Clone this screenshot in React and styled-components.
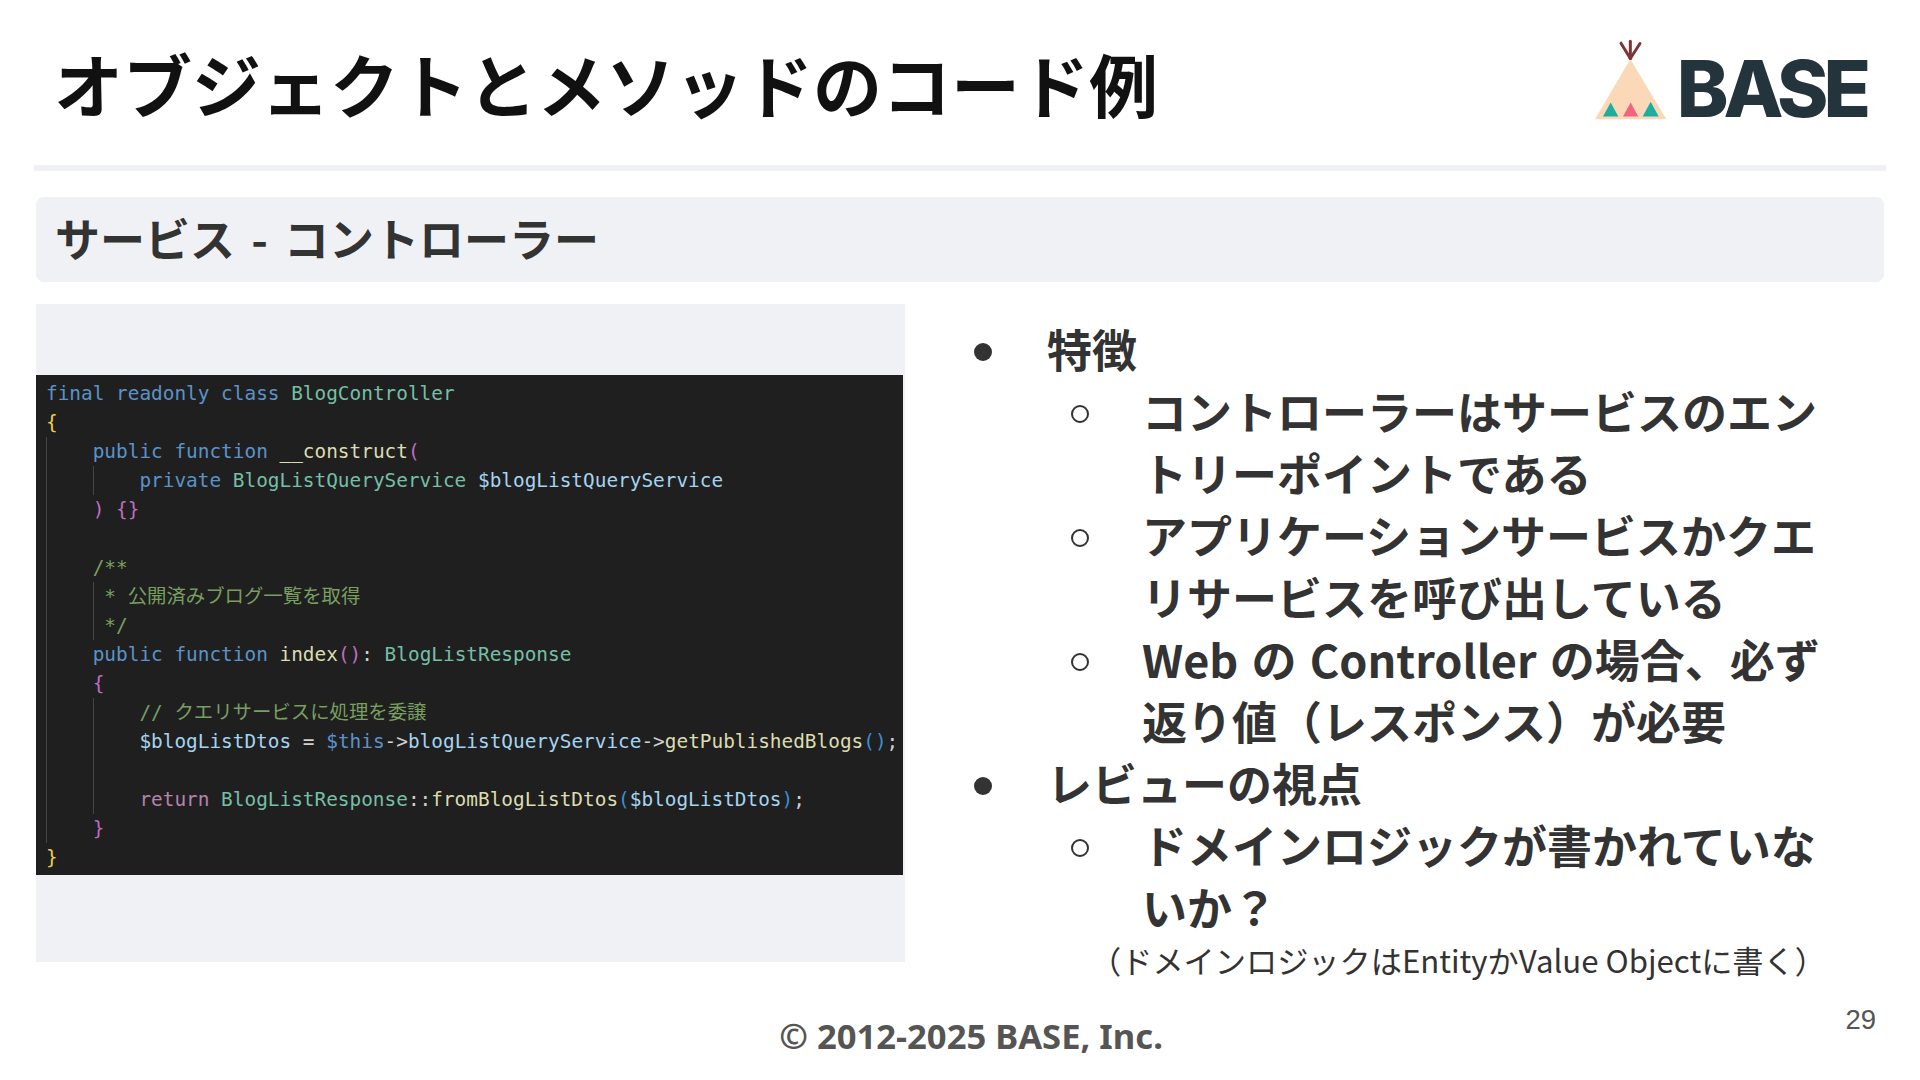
import styled, { createGlobalStyle } from 'styled-components';

const GlobalStyle = createGlobalStyle`
  html, body {
    margin: 0;
    padding: 0;
    background: #fff;
  }
`;

const Slide = styled.div`
  width: 1920px;
  height: 1080px;
  overflow: hidden;
  display: flex;
  flex-direction: column;
  background: #fff;
  font-family: "Noto Sans CJK JP", "Noto Sans", sans-serif;
`;

const TopBar = styled.header`
  height: 165px;
  flex: none;
  display: flex;
  justify-content: space-between;
  align-items: flex-start;
  padding: 0 54px 0 54px;
  box-sizing: border-box;
`;

const Title = styled.h1`
  margin: 33px 0 0;
  font-size: 69px;
  line-height: 100px;
  font-weight: 700;
  color: #111;
`;

const Logo = styled.div`
  display: flex;
  align-items: flex-start;
  gap: 8.5px;
  margin-top: 38px;
`;

const LogoText = styled.span`
  margin-top: 12px;
  font-family: Inter, sans-serif;
  font-weight: 800;
  font-size: 78px;
  line-height: 78px;
  letter-spacing: -5px;
  color: #24343c;
`;

const Divider = styled.div`
  height: 6px;
  flex: none;
  margin: 0 34px;
  background: #eff1f5;
`;

const SectionBar = styled.div`
  height: 85px;
  flex: none;
  margin: 26px 36px 0 36px;
  padding: 0 0 4px 19px;
  box-sizing: border-box;
  display: flex;
  align-items: center;
  border-radius: 8px;
  background: #eff1f5;
  font-size: 45px;
  font-weight: 700;
  word-spacing: 6px;
  color: #333;
`;

const Content = styled.main`
  flex: none;
  height: 680px;
  margin-top: 22px;
  display: grid;
  grid-template-columns: 869px 1fr;
  padding-left: 36px;
`;

const CodePanel = styled.div`
  height: 658px;
  padding-top: 71px;
  box-sizing: border-box;
  background: #eff1f5;
`;

const Code = styled.pre`
  margin: 0;
  width: 867px;
  height: 500px;
  padding: 4px 0 0 10px;
  box-sizing: border-box;
  overflow: hidden;
  background: #1f1f1f;
  color: #cccccc;
  font-family: "DejaVu Sans Mono", "Noto Sans CJK JP", monospace;
  font-size: 19.4px;
  line-height: 29px;
`;

const Line = styled.div`
  height: 29px;
`;

const Indent = styled.div`
  padding-left: ${(p) => (p.$narrow ? 10.6 : 45.7)}px;
  border-left: 1px solid #444;
`;

const colors = {
  kw: '#5b93c9',
  type: '#75bfa6',
  varb: '#a5d4ef',
  fn: '#dcdcb0',
  com: '#789f60',
  ctl: '#b583ae',
  gold: '#f0cf4a',
  pink: '#c26cc0',
  blue: '#3c8fd0',
  plain: '#d0d0d0',
};

const T = styled.span`
  color: ${(p) => colors[p.$c]};
`;

const BulletColumn = styled.div`
  padding: 0 0 0 69px;
`;

const BulletRow = styled.div`
  display: flex;
  align-items: flex-start;
  padding-left: ${(p) => (p.$nested ? 97 : 0)}px;
  font-size: 45px;
  line-height: 62px;
  font-weight: 700;
  word-spacing: 3px;
  color: #333;
  margin-top: ${(p) => (p.$first ? 14 : 0)}px;
`;

const Marker = styled.span`
  flex: none;
  width: 18px;
  height: 18px;
  margin-top: 25px;
  margin-right: ${(p) => (p.$hollow ? 53 : 55)}px;
  border-radius: 50%;
  box-sizing: border-box;
  background: ${(p) => (p.$hollow ? 'transparent' : '#333')};
  border: ${(p) => (p.$hollow ? '2px solid #333' : 'none')};
`;

const BulletText = styled.span`
  width: ${(p) => (p.$nested ? 690 : 700)}px;
`;

const Note = styled.div`
  margin: 0 0 0 116px;
  font-size: 31.2px;
  line-height: 44px;
  font-weight: 400;
  color: #333;
  white-space: nowrap;
`;

const Footer = styled.footer`
  flex: 1;
  display: grid;
  grid-template-columns: 1fr auto 1fr;
  padding: 0 44px 0 66px;
`;

const Copyright = styled.div`
  grid-column: 2;
  margin-top: 30px;
  font-family: "Noto Sans", sans-serif;
  font-size: 34.6px;
  line-height: 44px;
  font-weight: 700;
  color: #555;
`;

const PageNumber = styled.div`
  grid-column: 3;
  justify-self: end;
  margin-top: 21px;
  font-family: "Liberation Sans", sans-serif;
  font-size: 27.5px;
  line-height: 30px;
  color: #555;
`;

const TipiLogo = () => (
  <svg width="75" height="83" viewBox="100 55 225 248" aria-hidden="true">
    <polygon points="212,118 106,298 320,298" fill="#fad8b8" />
    <g stroke="#7d3434" strokeWidth="9" strokeLinecap="round" fill="none">
      <line x1="212" y1="116" x2="212" y2="64" />
      <line x1="212" y1="116" x2="184" y2="70" />
      <line x1="212" y1="116" x2="241" y2="71" />
    </g>
    <polygon points="153,248 130,290 176,290" fill="#1cae9f" />
    <polygon points="213,248 190,290 236,290" fill="#f2647f" />
    <polygon points="273,246 249,290 297,290" fill="#1cae9f" />
  </svg>
);

const CodeBlock = () => (
  <Code>
    <Line><T $c="kw">final readonly class</T> <T $c="type">BlogController</T></Line>
    <Line><T $c="gold">{'{'}</T></Line>
    <Indent>
      <Line><T $c="kw">public function</T> <T $c="fn">__construct</T><T $c="pink">(</T></Line>
      <Indent>
        <Line><T $c="kw">private</T> <T $c="type">BlogListQueryService</T> <T $c="varb">$blogListQueryService</T></Line>
      </Indent>
      <Line><T $c="pink">) {'{}'}</T></Line>
      <Line />
      <Line><T $c="com">/**</T></Line>
      <Indent $narrow>
        <Line><T $c="com">* 公開済みブログ一覧を取得</T></Line>
        <Line><T $c="com">*/</T></Line>
      </Indent>
      <Line><T $c="kw">public function</T> <T $c="fn">index</T><T $c="pink">()</T><T $c="plain">:</T> <T $c="type">BlogListResponse</T></Line>
      <Line><T $c="pink">{'{'}</T></Line>
      <Indent>
        <Line><T $c="com">// クエリサービスに処理を委譲</T></Line>
        <Line><T $c="varb">$blogListDtos</T> <T $c="plain">=</T> <T $c="kw">$this</T><T $c="plain">-&gt;</T><T $c="varb">blogListQueryService</T><T $c="plain">-&gt;</T><T $c="fn">getPublishedBlogs</T><T $c="blue">()</T><T $c="plain">;</T></Line>
        <Line />
        <Line><T $c="ctl">return</T> <T $c="type">BlogListResponse</T><T $c="plain">::</T><T $c="fn">fromBlogListDtos</T><T $c="blue">(</T><T $c="varb">$blogListDtos</T><T $c="blue">)</T><T $c="plain">;</T></Line>
      </Indent>
      <Line><T $c="pink">{'}'}</T></Line>
    </Indent>
    <Line><T $c="gold">{'}'}</T></Line>
  </Code>
);

const bullets = [
  { text: '特徴' },
  { text: 'コントローラーはサービスのエントリーポイントである', nested: true },
  { text: 'アプリケーションサービスかクエリサービスを呼び出している', nested: true },
  { text: 'Web の Controller の場合、必ず返り値（レスポンス）が必要', nested: true },
  { text: 'レビューの視点' },
  { text: 'ドメインロジックが書かれていないか？', nested: true },
];

const App = () => {
  return (
    <Slide>
      <GlobalStyle />
      <TopBar>
        <Title>オブジェクトとメソッドのコード例</Title>
        <Logo>
          <TipiLogo />
          <LogoText>BASE</LogoText>
        </Logo>
      </TopBar>
      <Divider />
      <SectionBar>サービス - コントローラー</SectionBar>
      <Content>
        <CodePanel>
          <CodeBlock />
        </CodePanel>
        <BulletColumn>
          {bullets.map((b, i) => (
            <BulletRow key={b.text} $nested={b.nested} $first={i === 0}>
              <Marker $hollow={b.nested} />
              <BulletText $nested={b.nested}>{b.text}</BulletText>
            </BulletRow>
          ))}
          <Note>（ドメインロジックはEntityかValue Objectに書く）</Note>
        </BulletColumn>
      </Content>
      <Footer>
        <Copyright>© 2012-2025 BASE, Inc.</Copyright>
        <PageNumber>29</PageNumber>
      </Footer>
    </Slide>
  );
};

export default App;
